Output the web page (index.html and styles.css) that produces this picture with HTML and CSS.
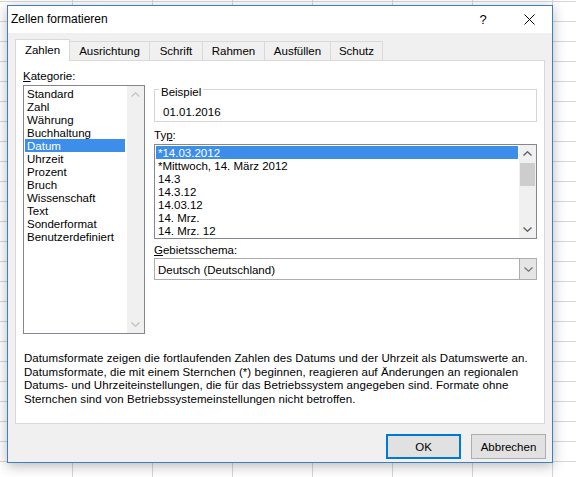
FILE: index.html
```html
<!DOCTYPE html>
<html lang="de">
<head>
<meta charset="utf-8">
<title>Zellen formatieren</title>
<link rel="stylesheet" href="styles.css">
</head>
<body>
<div class="window">
  <div class="titlebar">
    <span class="title">Zellen formatieren</span>
    <span class="caption-btn help">?</span>
    <span class="caption-btn close">
      <svg width="11" height="11" viewBox="0 0 11 11"><path d="M0.5 0.5 L10.5 10.5 M10.5 0.5 L0.5 10.5" stroke="#000" stroke-width="1" fill="none"/></svg>
    </span>
  </div>
  <div class="content">
    <div class="tabs">
      <div class="tab active t-zahlen">Zahlen</div>
      <div class="tab t-ausrichtung">Ausrichtung</div>
      <div class="tab t-schrift">Schrift</div>
      <div class="tab t-rahmen">Rahmen</div>
      <div class="tab t-ausfuellen">Ausfüllen</div>
      <div class="tab t-schutz">Schutz</div>
    </div>
    <div class="panel">
      <div class="cols">
        <div class="left">
          <div class="label"><u>K</u>ategorie:</div>
          <div class="listbox cat">
            <div class="items">
              <div class="item">Standard</div>
              <div class="item">Zahl</div>
              <div class="item">Währung</div>
              <div class="item">Buchhaltung</div>
              <div class="item selected">Datum</div>
              <div class="item">Uhrzeit</div>
              <div class="item">Prozent</div>
              <div class="item">Bruch</div>
              <div class="item">Wissenschaft</div>
              <div class="item">Text</div>
              <div class="item">Sonderformat</div>
              <div class="item">Benutzerdefiniert</div>
            </div>
            <div class="vscroll disabled">
              <div class="sbtn"><svg width="9" height="5" viewBox="0 0 9 5"><path d="M0.5 4.5 L4.5 0.8 L8.5 4.5" stroke="#c4c4c4" stroke-width="1.4" fill="none"/></svg></div>
              <div class="track"></div>
              <div class="sbtn"><svg width="9" height="5" viewBox="0 0 9 5"><path d="M0.5 0.5 L4.5 4.2 L8.5 0.5" stroke="#c4c4c4" stroke-width="1.4" fill="none"/></svg></div>
            </div>
          </div>
        </div>
        <div class="right">
          <div class="group">
            <div class="legend">Beispiel</div>
            <div class="sample">01.01.2016</div>
          </div>
          <div class="label label-typ">Ty<u>p</u>:</div>
          <div class="listbox typ">
            <div class="items">
              <div class="item selected">*14.03.2012</div>
              <div class="item">*Mittwoch, 14. März 2012</div>
              <div class="item">14.3</div>
              <div class="item">14.3.12</div>
              <div class="item">14.03.12</div>
              <div class="item">14. Mrz.</div>
              <div class="item">14. Mrz. 12</div>
            </div>
            <div class="vscroll">
              <div class="sbtn"><svg width="9" height="5" viewBox="0 0 9 5"><path d="M0.5 4.5 L4.5 0.8 L8.5 4.5" stroke="#606060" stroke-width="1.4" fill="none"/></svg></div>
              <div class="thumb"></div>
              <div class="track"></div>
              <div class="sbtn"><svg width="9" height="5" viewBox="0 0 9 5"><path d="M0.5 0.5 L4.5 4.2 L8.5 0.5" stroke="#606060" stroke-width="1.4" fill="none"/></svg></div>
            </div>
          </div>
          <div class="label label-geb"><u>G</u>ebietsschema:</div>
          <div class="combo">
            <span class="combo-text">Deutsch (Deutschland)</span>
            <span class="dd"><svg width="9" height="5" viewBox="0 0 9 5"><path d="M0.5 0.5 L4.5 4.2 L8.5 0.5" stroke="#707070" stroke-width="1.2" fill="none"/></svg></span>
          </div>
        </div>
      </div>
      <p class="desc">Datumsformate zeigen die fortlaufenden Zahlen des Datums und der Uhrzeit als Datumswerte an.<br>Datumsformate, die mit einem Sternchen (*) beginnen, reagieren auf Änderungen an regionalen<br>Datums- und Uhrzeiteinstellungen, die für das Betriebssystem angegeben sind. Formate ohne<br>Sternchen sind von Betriebssystemeinstellungen nicht betroffen.</p>
    </div>
    <div class="buttons">
      <button class="btn default">OK</button>
      <button class="btn">Abbrechen</button>
    </div>
  </div>
</div>
</body>
</html>
```
FILE: styles.css
```css
* { box-sizing: border-box; }
html, body { margin: 0; height: 100%; }
body {
  font-family: "Liberation Sans", Arial, sans-serif;
  font-size: 11.5px;
  color: #000;
  background-color: #fff;
  background-image:
    linear-gradient(to right, #d6d6d6 1px, transparent 1px),
    linear-gradient(to bottom, #d6d6d6 1px, transparent 1px);
  background-size: 80px 20px;
  background-position: 72px 1px;
  padding: 5px 0 0 7px;
  overflow: hidden;
}
.window {
  width: 546px;
  height: 458px;
  border: 1px solid #3f7fc0;
  background: #f0f0f0;
  box-shadow: 0 3px 12px rgba(0,0,0,0.28);
  display: flex;
  flex-direction: column;
}
.titlebar {
  height: 27px;
  background: #fff;
  display: flex;
  align-items: center;
  padding-left: 3px;
  font-size: 12px;
}
.title { flex: 1; margin-top: -1px; }
.caption-btn {
  width: 46px;
  height: 27px;
  display: flex;
  align-items: center;
  justify-content: center;
}
.help { font-size: 13px; }
.content {
  flex: 1;
  padding: 0 7px;
  display: flex;
  flex-direction: column;
}
.tabs {
  margin-top: 6px;
  height: 21px;
  display: flex;
  align-items: flex-end;
  position: relative;
  z-index: 1;
}
.tab {
  height: 19px;
  border: 1px solid #d9d9d9;
  border-bottom: none;
  margin-left: -1px;
  background: #f0f0f0;
  display: flex;
  align-items: center;
  justify-content: center;
}
.tab.active {
  height: 22px;
  margin-left: 0;
  margin-bottom: -1px;
  background: #fff;
  position: relative;
  z-index: 2;
  padding-bottom: 1px;
}
.t-zahlen { width: 55px; }
.t-ausrichtung { width: 81px; }
.t-schrift { width: 54px; }
.t-rahmen { width: 63px; }
.t-ausfuellen { width: 67px; }
.t-schutz { width: 53px; }
.panel {
  height: 364px;
  background: #fff;
  border: 1px solid #d9d9d9;
  padding: 9px 7px 0 7px;
}
.cols { display: flex; gap: 9px; }
.left { width: 122px; }
.right { width: 383px; padding-top: 19px; }
.label { height: 15px; line-height: 15px; }
.left .label { margin-bottom: 1px; margin-top: -1px; }
.listbox {
  border: 1px solid #828790;
  background: #fff;
  display: flex;
}
.listbox.cat { height: 249px; }
.listbox.typ { height: 95px; }
.items { flex: 1; }
.cat .items { padding: 1px 2px 0 1px; }
.typ .items { padding: 1px 1px 0 1px; }
.item {
  height: 13px;
  line-height: 14px;
  padding-left: 2px;
  white-space: nowrap;
}
.item.selected { background: #3d8eea; color: #fff; }
.vscroll {
  width: 17px;
  background: #f0f0f0;
  display: flex;
  flex-direction: column;
}
.sbtn {
  height: 17px;
  display: flex;
  align-items: center;
  justify-content: center;
}
.track { flex: 1; }
.thumb { height: 23px; margin: 1px 1px 0 1px; background: #cdcdcd; }
.group {
  height: 33px;
  border: 1px solid #d5d5d5;
  padding-left: 4px;
}
.legend {
  width: fit-content;
  height: 15px;
  line-height: 15px;
  margin-top: -5px;
  padding: 0 2px;
  background: #fff;
}
.sample { margin-top: 5px; padding-left: 4px; line-height: 15px; }
.label-typ { margin-top: 6px; margin-bottom: 1px; }
.label-geb { margin-top: 4px; }
.combo {
  height: 22px;
  border: 1px solid #adadad;
  background: #fff;
  display: flex;
  align-items: center;
}
.combo-text { flex: 1; padding-left: 3px; padding-top: 1px; }
.dd {
  width: 18px;
  height: 22px;
  margin: -1px -1px -1px 0;
  border: 1px solid #adadad;
  background: #e5e5e5;
  display: flex;
  align-items: center;
  justify-content: center;
}
.desc {
  margin: 18px 0 0 1px;
  line-height: 13.5px;
  letter-spacing: 0.07px;
  white-space: nowrap;
}
.buttons {
  margin-top: 10px;
  margin-right: -1px;
  display: flex;
  justify-content: flex-end;
  gap: 10px;
}
.btn {
  width: 75px;
  height: 25px;
  font: inherit;
  color: #000;
  background: #e1e1e1;
  border: 1px solid #adadad;
  padding: 0;
}
.btn.default { border: 2px solid #0078d7; }
```
